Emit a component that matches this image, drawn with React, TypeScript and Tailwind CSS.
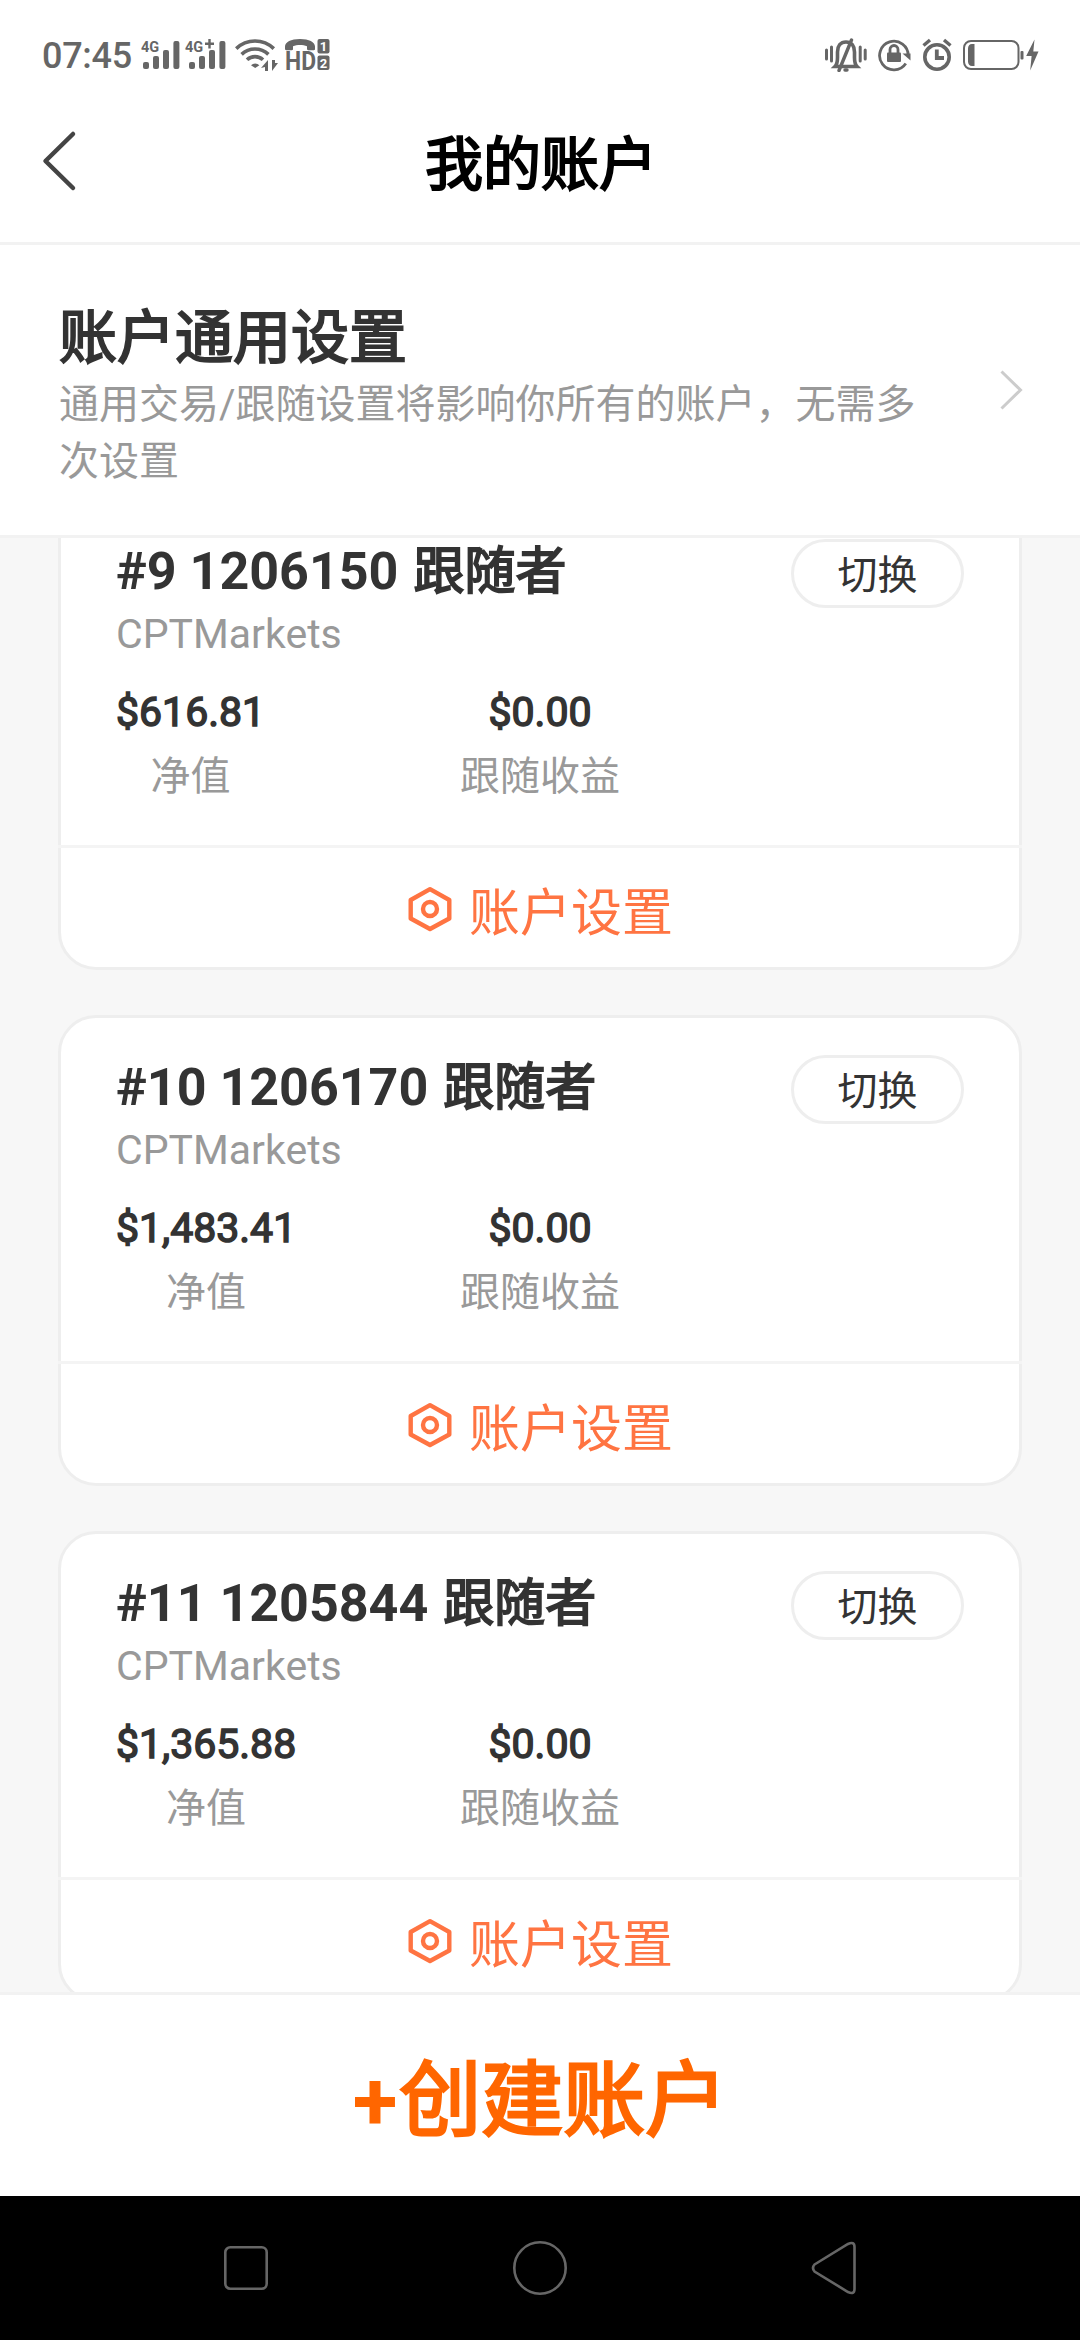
interface Account {
  index: number;
  login: string;
  broker: string;
  equity: string;
  profit: string;
}

const accounts: Account[] = [
  { index: 9, login: '1206150', broker: 'CPTMarkets', equity: '$616.81', profit: '$0.00' },
  { index: 10, login: '1206170', broker: 'CPTMarkets', equity: '$1,483.41', profit: '$0.00' },
  { index: 11, login: '1205844', broker: 'CPTMarkets', equity: '$1,365.88', profit: '$0.00' },
];

function SignalIcon({ plus }: { plus?: boolean }) {
  return (
    <svg width="42" height="32" viewBox="0 0 42 32" fill="currentColor" className="overflow-visible">
      <text x={plus ? -2 : 0} y="12.6" fontSize="14.5" fontWeight="700">
        4G
      </text>
      {plus && <path d="M18 3.500h3.300V0h2.400v3.500H27v2.400h-3.300v3.500h-2.400V5.900H18z" />}
      <rect x="2" y="23" width="6" height="7" rx="2" />
      <rect x="12" y="17" width="6" height="13" rx="2" />
      <rect x="22" y="11" width="6" height="19" rx="2" />
      <rect x="32.4" y="2" width="6" height="28" rx="2" />
    </svg>
  );
}

function WifiIcon() {
  return (
    <svg width="43" height="32" viewBox="0 0 43 32" fill="none" stroke="currentColor" strokeWidth="3.600">
      <path d="M1.200 9.600a27 27 0 0 1 37.600 0" />
      <path d="M6.600 15.400a19.400 19.400 0 0 1 26.800 0" />
      <path d="M12 20.800a11.600 11.600 0 0 1 16 0" />
      <path d="M16 26.200a6 6 0 0 1 8.400 0L20.200 29z" fill="currentColor" stroke="none" />
      <path d="M26 29l7-8v11h-3v-4zM43 24l-6 8V21h3v3z" fill="currentColor" stroke="none" />
    </svg>
  );
}

function VolteIcon() {
  return (
    <svg width="45" height="32" viewBox="0 0 45 32" fill="currentColor" className="overflow-visible">
      <path d="M0 10V7.500C0 3 6 0 15 0s15 3 15 7.500V10c0 .8-.5 1.200-1.200 1.200h-5.600c-.7 0-1.200-.4-1.200-1.200V7.200c-4-1.500-10-1.500-14 0V10c0 .8-.5 1.200-1.200 1.200H1.200C.5 11.200 0 10.800 0 10z" />
      <text x="0" y="30.500" fontSize="25.500" fontWeight="700" textLength="31" lengthAdjust="spacingAndGlyphs">
        HD
      </text>
      <rect x="32.500" y="0" width="12" height="14.500" rx="2" />
      <rect x="32.500" y="16.500" width="12" height="14.500" rx="2" />
      <text x="38.500" y="12" fontSize="13" fontWeight="700" fill="#fff" textAnchor="middle">
        1
      </text>
      <text x="38.500" y="28.500" fontSize="13" fontWeight="700" fill="#fff" textAnchor="middle">
        2
      </text>
    </svg>
  );
}

function MuteIcon() {
  return (
    <svg width="42" height="34" viewBox="0 0 42 34" fill="none" stroke="currentColor" strokeWidth="3" strokeLinecap="round">
      <path d="M1.500 12v9M6.500 9v14M40.200 12v9M35.200 9v14" />
      <path d="M10 28.500c2-2 2.500-5 2.500-9V14c0-6 3-10 8.500-10s8.500 4 8.500 10v5.500c0 4 .5 7 2.500 9z" strokeWidth="3.600" />
      <path d="M26.500 2L14 32.500M20 32h2" strokeWidth="3.400" />
    </svg>
  );
}

function RotationLockIcon() {
  return (
    <svg width="33" height="34" viewBox="0 0 33 34" fill="none" stroke="currentColor" strokeWidth="2.800">
      <path d="M27.800 25.500A14.300 14.300 0 1 1 30.200 18" />
      <path d="M24.500 15.500h8v7z" fill="currentColor" stroke="none" />
      <rect x="9" y="14.500" width="14" height="9.500" rx="1" fill="currentColor" stroke="none" />
      <path d="M12 15v-3.500a4 4 0 0 1 8 0V15" />
    </svg>
  );
}

function AlarmIcon() {
  return (
    <svg width="30" height="34" viewBox="0 0 30 34" fill="none" stroke="currentColor" strokeWidth="3.600">
      <circle cx="15" cy="19" r="12.200" />
      <path d="M14.800 11.500v8.500h7.200" strokeWidth="3.800" />
      <path d="M1.500 7.500l6.500-5.500M28.500 7.500L22 2" strokeWidth="3.400" />
    </svg>
  );
}

function BatteryIcon() {
  return (
    <svg width="77" height="34" viewBox="0 0 77 34" fill="currentColor">
      <rect x="1" y="3" width="54.500" height="28" rx="7" fill="none" stroke="currentColor" strokeWidth="2" />
      <path d="M11.500 6v22H9c-2.500 0-4-2-4-4.500v-13C5 8 6.500 6 9 6z" />
      <rect x="57.500" y="13" width="3" height="8.500" rx="1" />
      <path d="M71.500 1.500L63.200 18h5.400l-1.400 14.500L75.500 13.500h-5.200z" />
    </svg>
  );
}

function StatusBar() {
  return (
    <div className="flex h-[80px] items-center justify-between pt-[30px] pr-[40px] pl-[42px] text-[#666]">
      <div className="flex items-center">
        <span className="w-[99px] pt-[2px] text-[36px] leading-[40px] font-medium tracking-[-0.3px]">07:45</span>
        <div className="flex items-center gap-1">
          <SignalIcon />
          <SignalIcon plus />
        </div>
        <div className="ml-[6px] flex items-center gap-[7px]">
          <WifiIcon />
          <VolteIcon />
        </div>
      </div>
      <div className="flex items-center">
        <MuteIcon />
        <div className="ml-[11px] flex items-center gap-[11px]">
          <RotationLockIcon />
          <AlarmIcon />
          <BatteryIcon />
        </div>
      </div>
    </div>
  );
}

function SettingIcon() {
  return (
    <svg width="46" height="46" viewBox="0 0 46 46" fill="none" stroke="currentColor" strokeWidth="4.400" strokeLinejoin="round">
      <path d="M23 3.200L42.300 14v18.500L23 43 3.700 32.500V14z" />
      <circle cx="23" cy="23" r="7" />
    </svg>
  );
}

function AccountCard({ account }: { account: Account }) {
  return (
    <div className="h-[471px] rounded-[38px] border-[3px] border-[#eee] bg-white">
      <div className="flex h-[343px] justify-between px-[55px] pt-[37px]">
        <div className="flex grow flex-col pt-[3px]">
          <h2 className="text-[52px] leading-[60px] font-bold text-[#333]">
            #{account.index} {account.login}{' '}
            <span className="ml-[2px] text-[51px] font-normal [-webkit-text-stroke:1.8px_#333]">跟随者</span>
          </h2>
          <p className="mt-2 text-[41px] leading-[48px] text-[#999]">{account.broker}</p>
          <div className="mt-[29px] grid w-[848px] grid-cols-3">
            <div className="justify-self-start text-center">
              <p className="text-[41px] leading-[50px] text-[#333] [-webkit-text-stroke:1.5px_#333]">{account.equity}</p>
              <p className="mt-[16px] text-[40px] leading-[48px] text-[#999]">净值</p>
            </div>
            <div className="text-center">
              <p className="text-[41px] leading-[50px] text-[#333] [-webkit-text-stroke:1.5px_#333]">{account.profit}</p>
              <p className="mt-[16px] text-[40px] leading-[48px] text-[#999]">跟随收益</p>
            </div>
          </div>
        </div>
        <button className="-ml-[173px] flex h-[69px] w-[173px] shrink-0 items-center justify-center rounded-full border-[3px] border-[#eee] pt-[4px] text-[40px] leading-[48px] text-[#333]">
          切换
        </button>
      </div>
      <div className="-mx-[3px] h-[3px] bg-[#f4f4f4]" />
      <div className="flex h-[119px] items-center justify-center gap-[16px] pt-[2px] text-[#ff7442]">
        <SettingIcon />
        <span className="pt-[10px] text-[51px] leading-[60px]">账户设置</span>
      </div>
    </div>
  );
}

export default function App() {
  return (
    <div className="flex h-[2340px] w-[1080px] flex-col overflow-hidden bg-white font-[Roboto,'Noto_Sans_CJK_SC',sans-serif]">
      <StatusBar />

      <header className="flex h-[165px] items-center border-b-[3px] border-[#f2f2f2] px-[42px]">
        <svg width="36" height="62" viewBox="0 0 36 62" fill="none" stroke="#444" strokeWidth="4.500" strokeLinecap="round" strokeLinejoin="round">
          <path d="M31 4L3.500 31 31 58" />
        </svg>
        <h1 className="grow pt-[8px] pr-[34px] text-center text-[58px] leading-[60px] text-black [-webkit-text-stroke:2px_#000]">
          我的账户
        </h1>
      </header>

      <section className="flex h-[293px] items-start justify-between border-b-[3px] border-[#f2f2f2] pt-[59px] pr-[57px] pl-[59px]">
        <div className="w-[880px]">
          <h2 className="text-[58px] leading-[68px] text-[#333] [-webkit-text-stroke:2px_#333]">账户通用设置</h2>
          <p className="mt-[4px] text-[40px] leading-[57px] text-[#999]">
            通用交易/跟随设置将影响你所有的账户，无需多次设置
          </p>
        </div>
        <svg width="23" height="40" viewBox="0 0 23 40" fill="none" stroke="#ccc" strokeWidth="3" className="mt-[66px]">
          <path d="M1.500 1.500L20.500 20l-19 18.500" />
        </svg>
      </section>

      <main className="h-[1454px] overflow-hidden bg-[#f7f7f7] px-[58px]">
        <div className="-mt-[39px] flex flex-col gap-[45px]">
          {accounts.map((account) => (
            <AccountCard key={account.login} account={account} />
          ))}
        </div>
      </main>

      <footer className="flex h-[204px] items-center justify-center border-t-[3px] border-[#f2f2f2] pt-[11px]">
        <button className="text-[82px] leading-[96px] font-bold text-[#ff6600]">
          +<span className="ml-[2px] font-normal [-webkit-text-stroke:2.8px_#ff6600]">创建账户</span>
        </button>
      </footer>

      <nav className="flex h-[144px] items-center justify-between bg-black pr-[223px] pl-[223px] text-[#666]">
        <svg width="46" height="46" viewBox="0 0 46 46" fill="none" stroke="currentColor" strokeWidth="2.600">
          <rect x="2.300" y="2.300" width="41.400" height="41.400" rx="5" />
        </svg>
        <svg width="56" height="56" viewBox="0 0 56 56" fill="none" stroke="currentColor" strokeWidth="2.600">
          <circle cx="28" cy="28" r="25.700" />
        </svg>
        <svg width="46" height="54" viewBox="0 0 46 54" fill="none" stroke="currentColor" strokeWidth="2.600">
          <path d="M3.500 23.500L37 3Q43.500 0 43.500 6v42q0 6-6.500 3L3.500 30.500q-3-3.500 0-7z" />
        </svg>
      </nav>
    </div>
  );
}
